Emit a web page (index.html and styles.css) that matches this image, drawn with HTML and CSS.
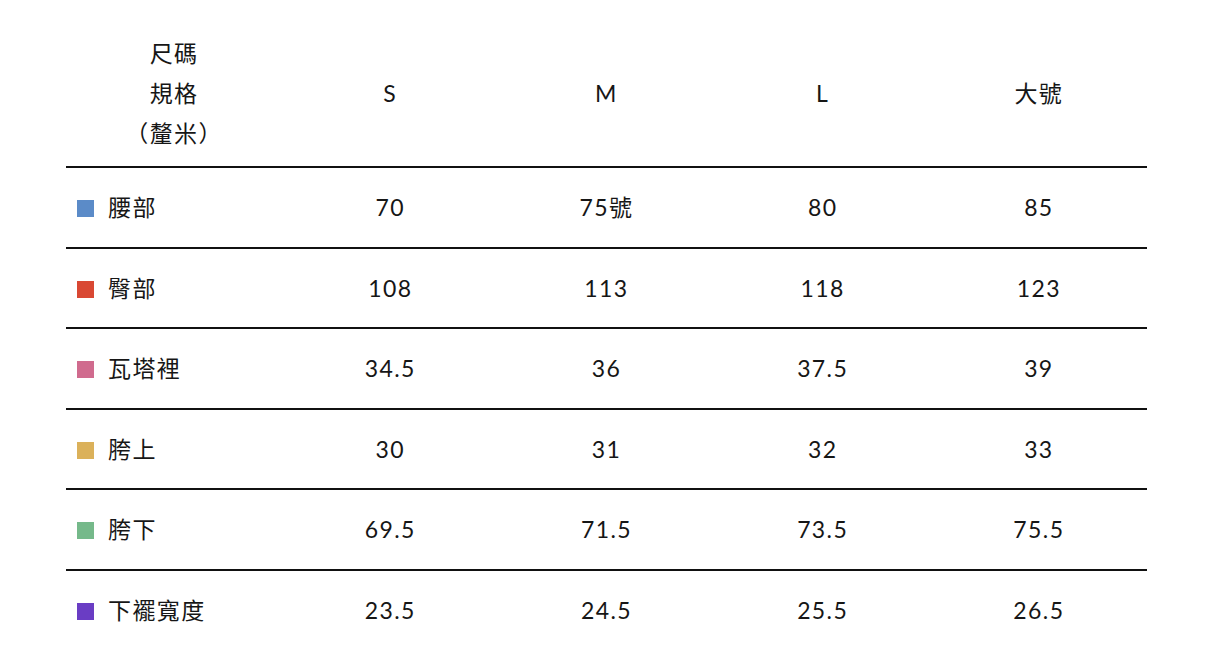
FILE: index.html
```html
<!DOCTYPE html>
<html lang="zh-Hant">
<head>
<meta charset="utf-8">
<link rel="stylesheet" href="styles.css">
</head>
<body>
<table class="size-table">
  <thead>
    <tr>
      <th class="head-label">尺碼<br>規格<br>（釐米）</th>
      <th>S</th>
      <th>M</th>
      <th>L</th>
      <th>大號</th>
    </tr>
  </thead>
  <tbody>
    <tr>
      <td class="label"><span class="swatch blue"></span>腰部</td>
      <td>70</td><td>75號</td><td>80</td><td>85</td>
    </tr>
    <tr>
      <td class="label"><span class="swatch red"></span>臀部</td>
      <td>108</td><td>113</td><td>118</td><td>123</td>
    </tr>
    <tr>
      <td class="label"><span class="swatch pink"></span>瓦塔裡</td>
      <td>34.5</td><td>36</td><td>37.5</td><td>39</td>
    </tr>
    <tr>
      <td class="label"><span class="swatch yellow"></span>胯上</td>
      <td>30</td><td>31</td><td>32</td><td>33</td>
    </tr>
    <tr>
      <td class="label"><span class="swatch green"></span>胯下</td>
      <td>69.5</td><td>71.5</td><td>73.5</td><td>75.5</td>
    </tr>
    <tr class="last">
      <td class="label"><span class="swatch purple"></span>下襬寬度</td>
      <td>23.5</td><td>24.5</td><td>25.5</td><td>26.5</td>
    </tr>
  </tbody>
</table>
</body>
</html>
```
FILE: styles.css
```css
html, body {
  margin: 0;
  padding: 0;
  background: #ffffff;
}
body {
  padding: 20px 0 0 66px;
  font-family: "Lato", "Noto Sans CJK TC", sans-serif;
  color: #161616;
  font-size: 23px;
  letter-spacing: 1.4px;
}
.size-table {
  width: 1081px;
  table-layout: fixed;
  border-collapse: collapse;
}
.size-table th {
  font-weight: 400;
  line-height: 40px;
  padding: 13px 0;
  text-align: center;
  border-bottom: 2px solid #111;
}
.size-table td {
  line-height: 40px;
  padding: 19px 0 19.5px;
  text-align: center;
  border-bottom: 2px solid #111;
}
.size-table tr.last td {
  border-bottom: none;
}
.size-table td.label {
  text-align: left;
  padding-left: 11px;
}
.swatch {
  display: inline-block;
  width: 17px;
  height: 17px;
  margin-right: 14px;
  vertical-align: -1px;
}
.blue { background: #5b8bc8; }
.red { background: #d94833; }
.pink { background: #d06b8e; }
.yellow { background: #dbb15a; }
.green { background: #75b98a; }
.purple { background: #6a3dc4; }
```
